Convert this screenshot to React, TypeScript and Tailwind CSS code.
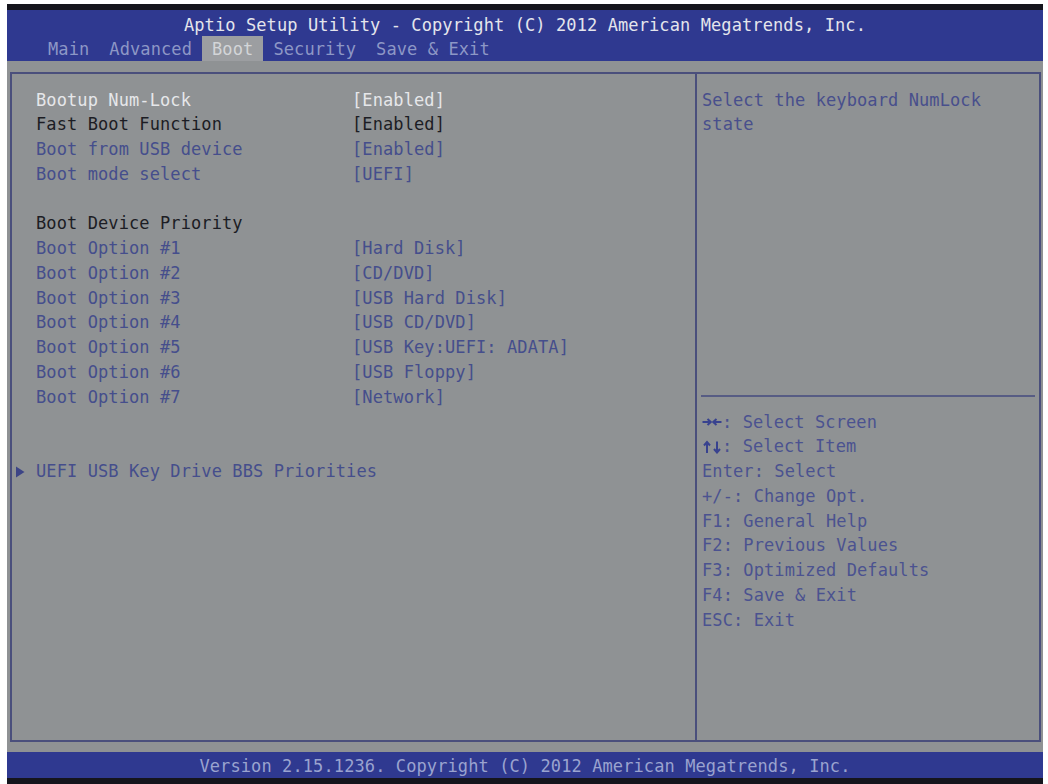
import React from "react";

const mono = { fontFamily: '"DejaVu Sans Mono", "Liberation Mono", monospace' };

type Row = { label: string; value?: string; tone: "white" | "dark" | "blue" } | null;

const rows: Row[] = [
  { label: "Bootup Num-Lock", value: "[Enabled]", tone: "white" },
  { label: "Fast Boot Function", value: "[Enabled]", tone: "dark" },
  { label: "Boot from USB device", value: "[Enabled]", tone: "blue" },
  { label: "Boot mode select", value: "[UEFI]", tone: "blue" },
  null,
  { label: "Boot Device Priority", tone: "dark" },
  { label: "Boot Option #1", value: "[Hard Disk]", tone: "blue" },
  { label: "Boot Option #2", value: "[CD/DVD]", tone: "blue" },
  { label: "Boot Option #3", value: "[USB Hard Disk]", tone: "blue" },
  { label: "Boot Option #4", value: "[USB CD/DVD]", tone: "blue" },
  { label: "Boot Option #5", value: "[USB Key:UEFI: ADATA]", tone: "blue" },
  { label: "Boot Option #6", value: "[USB Floppy]", tone: "blue" },
  { label: "Boot Option #7", value: "[Network]", tone: "blue" },
  null,
  null,
];

const toneClass = {
  white: "text-[#e6e7ea]",
  dark: "text-[#1c1d24]",
  blue: "text-[#454e8c]",
};

function Arrow({ dir }: { dir: "left" | "right" | "up" | "down" }) {
  const paths: Record<string, string> = {
    right: "M0.5 7 H8.5 M5.5 4 L8.8 7 L5.5 10",
    left: "M1.5 7 H9.5 M4.5 4 L1.2 7 L4.5 10",
    up: "M5 2 V13 M2 5.5 L5 2 L8 5.5",
    down: "M5 1.5 V12.5 M2 9 L5 12.5 L8 9",
  };
  return (
    <svg width="10" height="14" viewBox="0 0 10 14" className="shrink-0">
      <path d={paths[dir]} stroke="#38428f" strokeWidth="2" fill="none" />
    </svg>
  );
}

const keys: [React.ReactNode, string][] = [
  [
    <>
      <Arrow dir="right" />
      <Arrow dir="left" />
    </>,
    ": Select Screen",
  ],
  [
    <>
      <Arrow dir="up" />
      <Arrow dir="down" />
    </>,
    ": Select Item",
  ],
  [null, "Enter: Select"],
  [null, "+/-: Change Opt."],
  [null, "F1: General Help"],
  [null, "F2: Previous Values"],
  [null, "F3: Optimized Defaults"],
  [null, "F4: Save & Exit"],
  [null, "ESC: Exit"],
];

export default function App() {
  return (
    <div
      className="w-[1048px] h-[784px] bg-white pl-[7px] pr-[5px] pt-[4px] flex text-[17px] tracking-[0.1px]"
      style={mono}
    >
      <div className="flex-1 flex flex-col">
        <div className="h-[6px] bg-[#15151d]" />
        {/* Header */}
        <div className="h-[51px] bg-[#2f3990] flex flex-col">
          <div className="h-[26px] pt-[5px] flex items-center justify-center text-[#e4e5ec] whitespace-pre">
            Aptio Setup Utility - Copyright (C) 2012 American Megatrends, Inc.
          </div>
          <div className="h-[25px] flex ml-[31px] whitespace-pre">
            <div className="px-[10px] pt-[3px] flex items-center text-[#8d97c6]">Main</div>
            <div className="px-[10px] pt-[3px] flex items-center text-[#8d97c6]">Advanced</div>
            <div className="px-[10px] pt-[3px] flex items-center bg-[#9c9ea1] text-[#d3d5d8]">Boot</div>
            <div className="px-[10px] pt-[3px] flex items-center text-[#8d97c6]">Security</div>
            <div className="px-[10px] pt-[3px] flex items-center text-[#8d97c6]">Save &amp; Exit</div>
          </div>
        </div>
        {/* Body */}
        <div className="flex-1 bg-[#8f9294] pt-[11px] pl-[3px] pr-[2px] pb-[10px] flex">
          <div className="flex-1 border-2 border-[#4a4f7c] flex">
            {/* Left column */}
            <div className="w-[683px] pt-[14px] flex flex-col">
              {rows.map((r, i) =>
                r ? (
                  <div key={i} className={`h-[24.75px] flex items-center pl-[24px] whitespace-pre ${toneClass[r.tone]}`}>
                    <div className="w-[316px]">{r.label}</div>
                    {r.value && <div>{r.value}</div>}
                  </div>
                ) : (
                  <div key={i} className="h-[24.75px]" />
                )
              )}
              <div className="h-[24.75px] flex items-center whitespace-pre text-[#454e8c]">
                <div className="w-[24px] flex items-center pl-[3px]">
                  <svg width="10" height="12" viewBox="0 0 10 12">
                    <path d="M1 0.5 L9.5 6 L1 11.5 Z" fill="#3c4486" />
                  </svg>
                </div>
                <div>UEFI USB Key Drive BBS Priorities</div>
              </div>
            </div>
            {/* Right column */}
            <div className="flex-1 border-l-2 border-[#4a4f7c] flex flex-col">
              <div className="h-[321px] pt-[14px] px-[5px] text-[#484f8c]">
                <div className="h-[24.75px] flex items-center whitespace-pre">Select the keyboard NumLock</div>
                <div className="h-[24.75px] flex items-center whitespace-pre">state</div>
              </div>
              <div className="mx-[4px] h-[2px] bg-[#575c84]" />
              <div className="pt-[13px] px-[5px] text-[#4b5290]">
                {keys.map(([a, t], i) => (
                  <div key={i} className="h-[24.75px] flex items-center whitespace-pre">
                    {a && <span className="flex items-center">{a}</span>}
                    <span>{t}</span>
                  </div>
                ))}
              </div>
            </div>
          </div>
        </div>
        {/* Footer */}
        <div className="h-[26px] pt-[3px] bg-[#2f3990] flex items-center justify-center text-[#9aa3cf] whitespace-pre">
          Version 2.15.1236. Copyright (C) 2012 American Megatrends, Inc.
        </div>
        <div className="h-[6px] bg-[#15151d]" />
      </div>
    </div>
  );
}
